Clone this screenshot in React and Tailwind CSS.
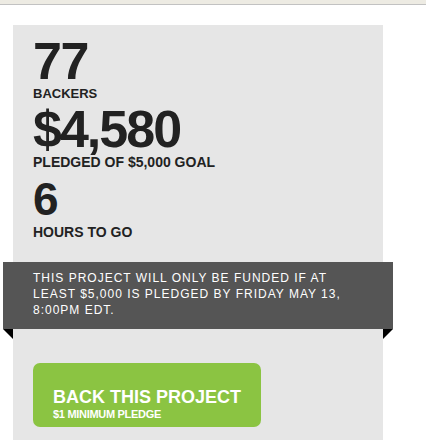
export default function App() {
  const font = { fontFamily: '"Liberation Sans", Arial, sans-serif' };
  return (
    <div className="min-h-screen bg-white" style={font}>
      <div className="h-[4px] bg-[#edebe3] border-b border-[#c2c2c2] box-content" />

      <div className="ml-[13px] mt-[20px] w-[370px] bg-[#e6e6e6] pt-[10px] pb-[20px]">
        <div className="pl-[20px] text-[#222222] font-bold">
          <div className="text-[52px] leading-none tracking-[-1.5px]">77</div>
          <div className="text-[13px] leading-none">BACKERS</div>
          <div className="mt-[3px] text-[52px] leading-none tracking-[-2px]">$4,580</div>
          <div className="text-[14px] leading-none">PLEDGED OF $5,000 GOAL</div>
          <div className="mt-[7px] text-[46px] leading-none">6</div>
          <div className="mt-[3px] text-[14px] leading-none">HOURS TO GO</div>
        </div>

        <div className="relative -mx-[10px] mt-[23px]">
          <div className="bg-[#555555] pl-[30px] pr-[40px] pt-[8px] pb-[11px] text-[12px] leading-[16px] tracking-[1px] text-white">
            THIS PROJECT WILL ONLY BE FUNDED IF AT LEAST $5,000 IS PLEDGED BY FRIDAY MAY 13, 8:00PM EDT.
          </div>
          <svg className="absolute left-0 top-full" width="10" height="10" viewBox="0 0 10 10">
            <polygon points="0,0 10,0 10,10" fill="#000" />
          </svg>
          <svg className="absolute right-0 top-full" width="10" height="10" viewBox="0 0 10 10">
            <polygon points="0,0 10,0 0,10" fill="#000" />
          </svg>
        </div>

        <div className="pl-[20px] mt-[34px]">
          <button className="block w-[228px] h-[64px] rounded-[7px] bg-[#8bc442] pl-[20px] pt-[17px] text-left text-white font-bold">
            <div className="text-[18px] leading-none">BACK THIS PROJECT</div>
            <div className="mt-[3px] text-[11px] leading-none tracking-[-0.3px]">$1 MINIMUM PLEDGE</div>
          </button>
        </div>
      </div>
    </div>
  );
}
